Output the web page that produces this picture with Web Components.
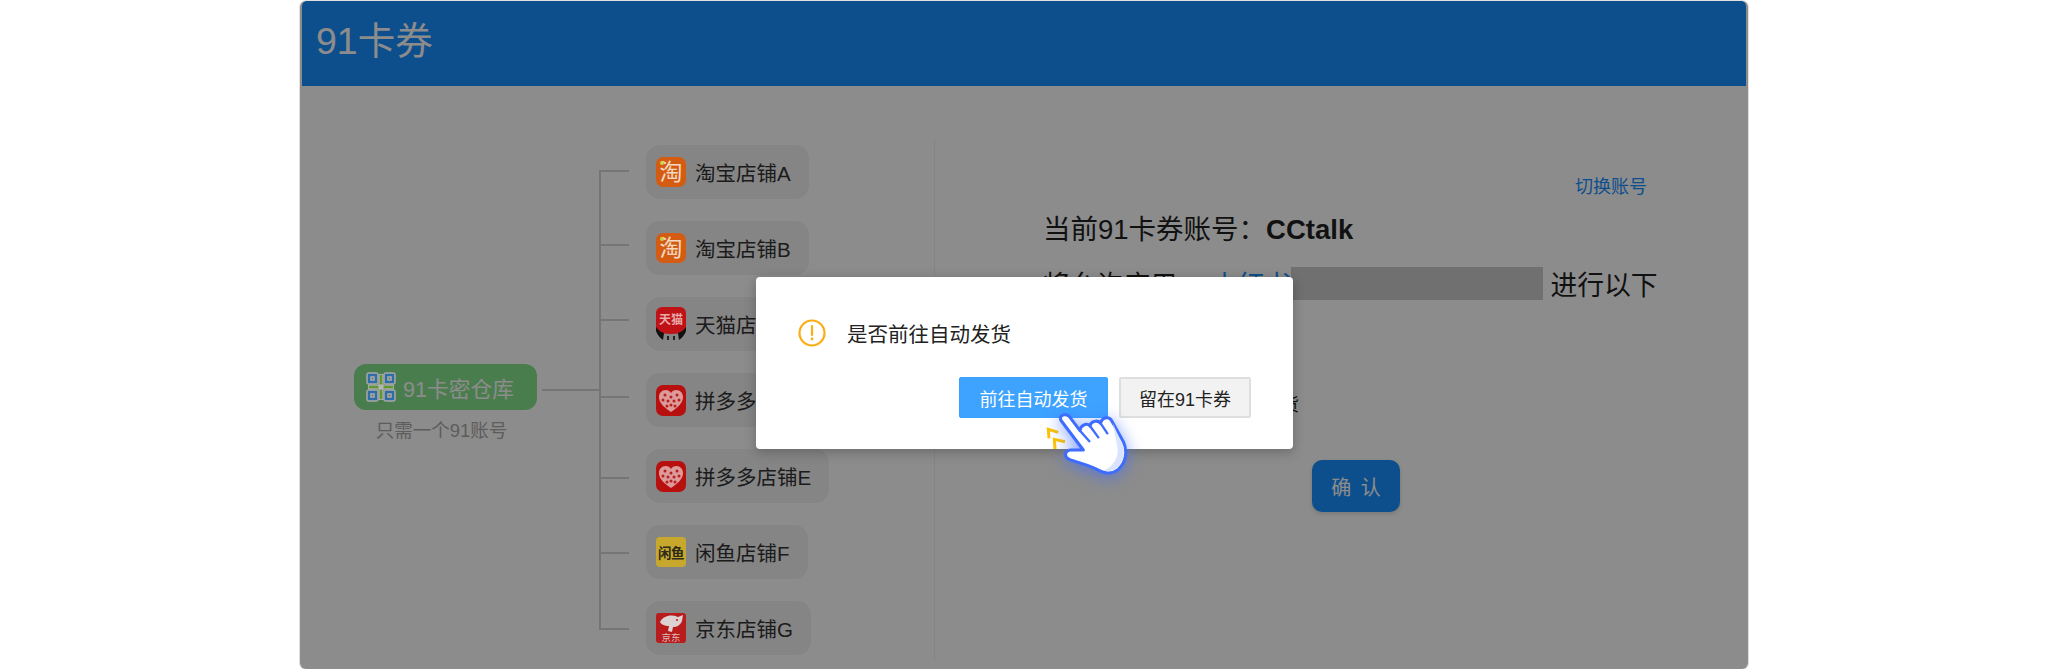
<!DOCTYPE html>
<html lang="zh">
<head>
<meta charset="utf-8">
<title>91卡券</title>
<style>
  html, body { margin: 0; background: #fff; }
  body { font-family: "Liberation Sans", "Noto Sans CJK SC", sans-serif; }
</style>
</head>
<body>
<shop-card>
  <span slot="title">91卡券</span>
  <store-tree slot="left">
    <store-pill kind="taobao" style="--y:25px">淘宝店铺A</store-pill>
    <store-pill kind="taobao" style="--y:23px">淘宝店铺B</store-pill>
    <store-pill kind="tmall" style="--y:22px">天猫店铺C</store-pill>
    <store-pill kind="pdd" style="--y:23px">拼多多店铺D</store-pill>
    <store-pill kind="pdd" style="--y:28px">拼多多店铺E</store-pill>
    <store-pill kind="xianyu" style="--y:27px">闲鱼店铺F</store-pill>
    <store-pill kind="jd" style="--y:27px">京东店铺G</store-pill>
  </store-tree>
  <account-panel slot="right"></account-panel>
  <confirm-dialog slot="dialog"></confirm-dialog>
</shop-card>

<script>
const FONT = `"Liberation Sans", "Noto Sans CJK SC", sans-serif`;

class ShopCard extends HTMLElement {
  constructor() {
    super();
    const shadowRoot = this.attachShadow({mode: 'open'});
    shadowRoot.innerHTML = `
      <style>
        :host {
          display: flex;
          flex-direction: column;
          position: relative;
          box-sizing: border-box;
          width: 1448px;
          height: 668px;
          margin: 1px 0 0 300px;
          background: #fff;
          border-radius: 6px;
          overflow: hidden;
          box-shadow: 0 0 0 1px rgba(0,0,0,.12);
          font-family: ${FONT};
        }
        .head {
          height: 85px;
          flex: none;
          display: flex;
          align-items: center;
          margin: 0 2px;
          padding: 0 0 12px 14px;
          box-sizing: border-box;
          border-radius: 5px 5px 0 0;
          background: #1890ff;
          color: #fff;
          font-size: 37.500px;
        }
        .body {
          flex: 1;
          display: flex;
          min-height: 0;
        }
        .mask {
          position: absolute;
          inset: 0;
          z-index: 1;
          background: rgba(0,0,0,.45);
        }
      </style>
      <div class="head"><slot name="title"></slot></div>
      <div class="body">
        <slot name="left"></slot>
        <slot name="right"></slot>
      </div>
      <div class="mask"></div>
      <slot name="dialog"></slot>`;
  }
}

class StoreTree extends HTMLElement {
  constructor() {
    super();
    const shadowRoot = this.attachShadow({mode: 'open'});
    shadowRoot.innerHTML = `
      <style>
        :host {
          display: flex;
          flex: none;
          align-items: flex-start;
          box-sizing: border-box;
          width: 634px;
          padding: 59px 0 0 54px;
        }
        .root {
          flex: none;
          width: 183px;
          margin-top: 219px;
          display: flex;
          flex-direction: column;
          align-items: center;
        }
        .tag {
          box-sizing: border-box;
          width: 183px;
          height: 46px;
          display: flex;
          align-items: center;
          gap: 7px;
          padding-left: 12px;
          border-radius: 12px;
          background: #87e38c;
          color: #fff;
          font-size: 21.700px;
        }
        .tag svg { position: relative; z-index: 2; flex: none; }
        .sub {
          margin: 8px 8px 0 0;
          font-size: 18.500px;
          line-height: 26px;
          color: #aaa;
        }
        .stem {
          flex: none;
          width: 57px;
          height: 2px;
          margin: 244px 0 0 5px;
          background: #d5d5d5;
        }
        .list {
          position: relative;
          flex: none;
          display: flex;
          flex-direction: column;
          gap: 22px;
          padding-left: 47px;
          align-items: flex-start;
        }
        .list::before {
          content: "";
          position: absolute;
          left: 0;
          top: 25px;
          bottom: 26px;
          width: 2px;
          background: #d5d5d5;
        }
      </style>
      <div class="root">
        <div class="tag">
          <svg width="30" height="30" viewBox="0 0 30 30">
            <g fill="none" stroke="#a8a8a8" stroke-width="5.500" stroke-linejoin="round">
              <rect x="3" y="3" width="7" height="7"/>
              <rect x="20" y="3" width="7" height="7"/>
              <rect x="3" y="20" width="7" height="7"/>
              <rect x="20" y="20" width="7" height="7"/>
            </g>
            <g fill="none" stroke="#2f6da8" stroke-width="2.400">
              <rect x="3" y="3" width="7" height="7"/>
              <rect x="20" y="3" width="7" height="7"/>
              <rect x="3" y="20" width="7" height="7"/>
              <rect x="20" y="20" width="7" height="7"/>
            </g>
            <path d="M15 2v26M2 15h26" stroke="#a8a8a8" stroke-width="5" fill="none"/>
            <path d="M15 3v24M3 15h24" stroke="#5f9a2f" stroke-width="2.500" fill="none"/>
            <rect x="12.500" y="12.500" width="5" height="5" fill="#b5b5b5"/>
          </svg>
          <span>91卡密仓库</span>
        </div>
        <div class="sub">只需一个91账号</div>
      </div>
      <div class="stem"></div>
      <div class="list"><slot></slot></div>`;
  }
}

const STORE_ICONS = {
  taobao: `<div class="ic tb"><i></i>淘</div>`,
  tmall: `<div class="ic tm"><svg width="30" height="34" viewBox="0 0 30 34">
      <path d="M0 6a6 6 0 0 1 6-6h18a6 6 0 0 1 6 6v17c-4 3-9 4-15 4s-11-1-15-4z" fill="#bf1216"/>
      <path d="M0 20c3 4 5 5 8 6l-1 7c-3-2-6-6-7-9z M30 20c-3 4-5 5-8 6l1 7c3-2 6-6 7-9z" fill="#111"/>
      <path d="M11 29h2v4h-2z M17 29h2v4h-2z" fill="#222"/>
    </svg><span>天猫</span></div>`,
  pdd: `<div class="ic pd"><svg width="30" height="31" viewBox="0 0 30 31">
      <path d="M15 27C8 22 3 18 3 12c0-4 3-7 6.500-7C12 5 14 6 15 8c1-2 3-3 5.500-3C24 5 27 8 27 12c0 6-5 10-12 15z" fill="#dc9a9a"/>
      <g fill="#b8201e">
        <circle cx="9" cy="10" r="1.500"/><circle cx="15" cy="12" r="1.500"/><circle cx="21" cy="10" r="1.500"/>
        <circle cx="7" cy="15" r="1.500"/><circle cx="12" cy="16" r="1.500"/><circle cx="18" cy="16" r="1.500"/><circle cx="23" cy="15" r="1.500"/>
        <circle cx="11" cy="21" r="1.500"/><circle cx="15" cy="20" r="1.500"/><circle cx="19" cy="21" r="1.500"/>
      </g></svg></div>`,
  xianyu: `<div class="ic xy">闲鱼</div>`,
  jd: `<div class="ic jd"><svg width="30" height="20" viewBox="0 0 30 20">
      <path d="M4 9C7 3 15 1 22 4l5-2-1 6c-2 5-6 6-9 6l-1 5-4-1 1-5C8 13 5 11 4 9z" fill="#dcd2d2"/>
      <circle cx="21" cy="7" r="1" fill="#b81c1c"/></svg><span>京东</span></div>`
};

class StorePill extends HTMLElement {
  constructor() {
    super();
    const shadowRoot = this.attachShadow({mode: 'open'});
    const kind = this.getAttribute('kind') || 'taobao';
    shadowRoot.innerHTML = `
      <style>
        :host {
          position: relative;
          display: flex;
          align-items: center;
          box-sizing: border-box;
          height: 54px;
          gap: 9px;
          padding: 0 18px 0 10px;
          border-radius: 14px;
          background: #f2f2f2;
          color: #333;
          font-size: 20.500px;
          white-space: nowrap;
        }
        :host::before {
          content: "";
          position: absolute;
          left: -47px;
          top: var(--y, 26px);
          width: 30px;
          height: 2px;
          background: #d5d5d5;
        }
        .ic {
          position: relative;
          z-index: 2;
          flex: none;
          width: 30px;
          height: 30px;
          border-radius: 7px;
          overflow: hidden;
          display: flex;
          flex-direction: column;
          align-items: center;
          justify-content: center;
          text-align: center;
        }
        .tb { background: #d45c12; color: #f4d9c2; font-size: 23px; line-height: 30px; }
        .tb i { position: absolute; left: 4px; top: 4px; width: 4px; height: 4px; border-radius: 50%; background: #c9d24a; }
        .tm { height: 34px; color: #e8a8a8; font-size: 12px; font-weight: bold; line-height: 14px; justify-content: flex-start; padding-top: 6px; box-sizing: border-box; border-radius: 0; }
        .tm svg { position: absolute; left: 0; top: 0; }
        .tm span { position: relative; }
        .pd { background: #b8100f; height: 31px; }
        .xy { background: #c8a82c; color: #2b2a1a; font-size: 13.500px; font-weight: bold; border-radius: 4px; letter-spacing: -.5px; white-space: nowrap; }
        .jd { background: #b81c1c; border-radius: 3px; justify-content: flex-start; }
        .jd span { color: #dcbcbc; font-size: 9.500px; line-height: 9px; }
      </style>
      ${STORE_ICONS[kind]}
      <slot></slot>`;
  }
}

class AccountPanel extends HTMLElement {
  constructor() {
    super();
    const shadowRoot = this.attachShadow({mode: 'open'});
    shadowRoot.innerHTML = `
      <style>
        :host {
          display: flex;
          flex-direction: column;
          flex: 1;
          min-width: 0;
          box-sizing: border-box;
          height: 522px;
          margin-top: 53px;
          padding: 36px 101px 0 108px;
          border-left: 1px solid #f0f0f0;
          color: #1f1f1f;
        }
        a { color: #1890ff; text-decoration: none; }
        .switch { align-self: flex-end; font-size: 18px; line-height: 25px; }
        .who { margin-top: 11px; font-size: 27.500px; line-height: 38px; white-space: nowrap; }
        .who b { font-weight: bold; }
        .grant {
          display: flex;
          align-items: flex-start;
          margin-top: 18px;
          font-size: 26.800px;
          line-height: 38px;
          white-space: nowrap;
        }
        .app { margin-left: 34px; color: #1890ff; }
        .hidden-box { flex: none; width: 252px; height: 33px; background: #ccc; margin-right: 7px; }
        .auto { margin: 87px 0 0 184px; font-size: 18px; line-height: 26px; }
        .ok {
          align-self: flex-start;
          margin: 42px 0 0 269px;
          width: 88px;
          height: 52px;
          border: 0;
          padding: 0;
          border-radius: 10px;
          background: #1890ff;
          color: #fff;
          font: 20px ${FONT};
          word-spacing: 4px;
          box-shadow: 0 2px 4px rgba(0,0,0,.15);
        }
      </style>
      <a class="switch">切换账号</a>
      <div class="who">当前91卡券账号：<b>CCtalk</b></div>
      <div class="grant">
        <span>将允许应用</span>
        <span class="app">小红书</span>
        <span class="hidden-box"></span>
        <span>进行以下</span>
      </div>
      <div class="auto">自动发货</div>
      <button class="ok">确 认</button>`;
  }
}

class ConfirmDialog extends HTMLElement {
  constructor() {
    super();
    const shadowRoot = this.attachShadow({mode: 'open'});
    shadowRoot.innerHTML = `
      <style>
        :host {
          position: absolute;
          z-index: 3;
          left: 456px;
          top: 276px;
          box-sizing: border-box;
          width: 537px;
          height: 172px;
          padding: 41px 42px 0;
          border-radius: 4px;
          background: #fff;
          box-shadow: 0 3px 12px rgba(0,0,0,.25);
          color: #222;
          font-family: ${FONT};
        }
        .msg {
          display: flex;
          align-items: center;
          gap: 21px;
          font-size: 20.500px;
          height: 30px;
        }
        .actions {
          display: flex;
          justify-content: flex-end;
          gap: 11px;
          margin-top: 29px;
        }
        button {
          box-sizing: border-box;
          height: 41px;
          padding: 0;
          font: 18px ${FONT};
          border-radius: 2px;
        }
        .primary { width: 149px; border: 1px solid #39a0ff; background: #3ea2ff; color: #fff; }
        .plain { width: 132px; border: 2px solid #dedede; background: #f2f2f2; color: #222; }
        .hand {
          position: absolute;
          left: 274px;
          top: 123px;
          overflow: visible;
          filter: drop-shadow(0 3px 8px rgba(61,108,255,.65));
        }
        .spark { position: absolute; left: 274px; top: 123px; }
      </style>
      <div class="msg">
        <svg width="28" height="28" viewBox="0 0 28 28">
          <circle cx="14" cy="14" r="12.500" fill="none" stroke="#faad14" stroke-width="2.200"/>
          <path d="M14 7v9" stroke="#faad14" stroke-width="2.200" stroke-linecap="round"/>
          <circle cx="14" cy="20" r="1.400" fill="#faad14"/>
        </svg>
        <span>是否前往自动发货</span>
      </div>
      <div class="actions">
        <button class="primary">前往自动发货</button>
        <button class="plain">留在91卡券</button>
      </div>
      <svg class="spark" width="120" height="49" viewBox="0 0 360 147">
        <g fill="none" stroke="#ffc400" stroke-width="9">
          <path d="M57 115 L55 88 L85 97"/>
          <path d="M75 147 L73 118 L105 125"/>
        </g>
      </svg>
      <svg class="hand" width="120" height="90" viewBox="0 0 360 270">
        <path d="M92 60C88 44 110 38 120 52L150 92C150 78 170 66 180 78C182 64 204 58 212 70C214 54 236 46 245 62L280 125C292 150 290 185 265 208C248 222 225 222 208 212C180 195 150 190 118 178C100 170 105 152 122 150L160 150Z" fill="#fff" stroke="#3d6cff" stroke-width="9" stroke-linejoin="round"/>
        <path d="M248 70L275 128C286 152 284 182 260 204C246 214 232 215 220 212C250 200 268 170 262 140Z" fill="#dbe4ff"/>
        <path d="M150 92L178 124M180 78L205 112M212 70L232 100" fill="none" stroke="#3d6cff" stroke-width="7" stroke-linecap="round"/>
      </svg>`;
  }
}

customElements.define('shop-card', ShopCard);
customElements.define('store-tree', StoreTree);
customElements.define('store-pill', StorePill);
customElements.define('account-panel', AccountPanel);
customElements.define('confirm-dialog', ConfirmDialog);
</script>
</body>
</html>
